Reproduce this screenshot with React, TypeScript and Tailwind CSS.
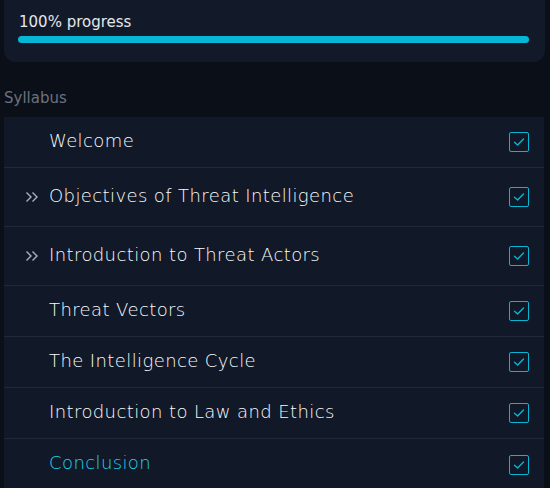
import React from "react";

const items = [
  { t: "Welcome", chev: false },
  { t: "Objectives of Threat Intelligence", chev: true },
  { t: "Introduction to Threat Actors", chev: true },
  { t: "Threat Vectors", chev: false },
  { t: "The Intelligence Cycle", chev: false },
  { t: "Introduction to Law and Ethics", chev: false },
  { t: "Conclusion", chev: false, active: true },
];

function Check() {
  return (
    <div className="w-[20px] h-[20px] rounded-[2px] border-[1.5px] border-[#06b6d4] flex items-center justify-center">
      <svg width="14" height="14" viewBox="0 0 14 14" fill="none">
        <path d="M2.5 7.2 L5.6 10 L11.5 4" stroke="#06b6d4" strokeWidth="1.4" strokeLinecap="round" strokeLinejoin="round" />
      </svg>
    </div>
  );
}

export default function App() {
  return (
    <div className="w-[550px] h-[488px] bg-[#0b0f18] overflow-hidden" style={{ fontFamily: "'DejaVu Sans', sans-serif" }}>
      <div className="mx-[4px] w-[541px] bg-[#121a2a] rounded-b-[12px] pt-[13px] pb-[19px] px-[14px] -mt-[1px]">
        <div className="text-[15px] leading-[20px] text-[#e5e7eb] pl-[1px]">100% progress</div>
        <div className="mt-[4px] h-[7px] rounded-full bg-[#06b6d4] w-[511px]" />
      </div>
      <div className="mt-[26px] pl-[4px] text-[15px] leading-[20px] text-[#6b7280]">Syllabus</div>
      <div className="mt-[9px] ml-[4px] w-[540px] bg-[#111827]">
        {items.map((it, i) => (
          <div
            key={i}
            className={`flex items-center pr-[15px] ${i < items.length - 1 ? "border-b border-[#1f2937]" : ""} ${it.chev ? "h-[59px]" : "h-[51px]"}`}
          >
            <div className="w-[45px] flex justify-end pr-[10px]">
              {it.chev && (
                <svg width="14" height="14" viewBox="0 0 14 14" fill="none">
                  <path d="M1.5 2.5 L6 7 L1.5 11.5 M7.5 2.5 L12 7 L7.5 11.5" stroke="#aab2bf" strokeWidth="1.4" />
                </svg>
              )}
            </div>
            <div
              className={`flex-1 mb-[4px] text-[18px] font-extralight tracking-[0.4px] ${it.active ? "text-[#22d3ee]" : "text-[#f9fafb]"}`}
            >
              {it.t}
            </div>
            <Check />
          </div>
        ))}
      </div>
    </div>
  );
}
